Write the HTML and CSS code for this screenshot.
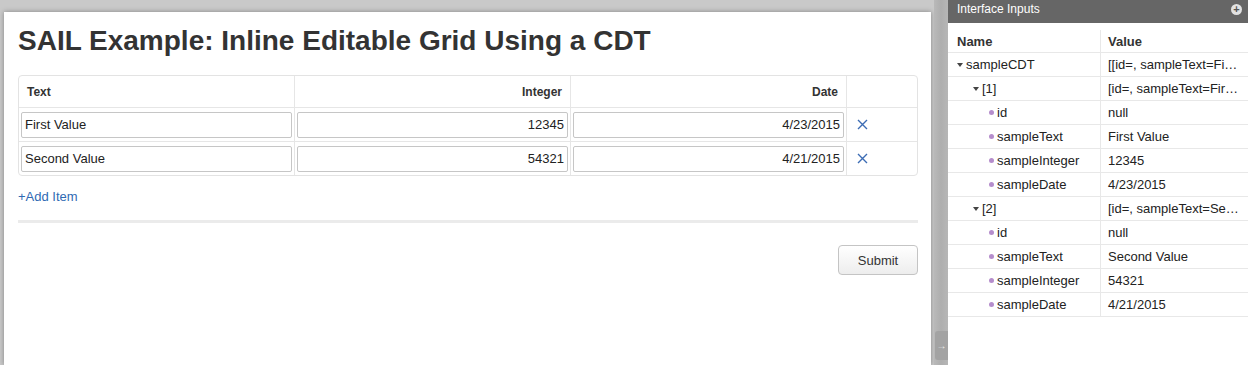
FILE: index.html
```html
<!DOCTYPE html>
<html lang="en">
<head>
    <meta charset="UTF-8">
    <meta name="viewport" content="width=device-width, initial-scale=1.0">
    <title>SAIL Example: Inline Editable Grid Using a CDT</title>
    <link rel="stylesheet" href="styles.css">
</head>
<body>
    <div class="workspace">
        <div class="stage">
            <div class="form-panel">
                <h1 class="title">SAIL Example: Inline Editable Grid Using a CDT</h1>

                <div class="grid">
                    <div class="grid-row grid-head">
                        <div class="cell">Text</div>
                        <div class="cell num">Integer</div>
                        <div class="cell num">Date</div>
                        <div class="cell"></div>
                    </div>
                    <div class="grid-row">
                        <div class="cell"><input class="field" value="First Value"></div>
                        <div class="cell"><input class="field num" value="12345"></div>
                        <div class="cell"><input class="field num" value="4/23/2015"></div>
                        <div class="cell remove">
                            <svg width="11" height="11" viewBox="0 0 11 11"><path d="M1 1 L10 10 M10 1 L1 10" stroke="#3c6cb4" stroke-width="1.4" fill="none"/></svg>
                        </div>
                    </div>
                    <div class="grid-row">
                        <div class="cell"><input class="field" value="Second Value"></div>
                        <div class="cell"><input class="field num" value="54321"></div>
                        <div class="cell"><input class="field num" value="4/21/2015"></div>
                        <div class="cell remove">
                            <svg width="11" height="11" viewBox="0 0 11 11"><path d="M1 1 L10 10 M10 1 L1 10" stroke="#3c6cb4" stroke-width="1.4" fill="none"/></svg>
                        </div>
                    </div>
                </div>

                <a class="add-link" href="#">+Add Item</a>
                <div class="divider"></div>
                <div class="actions">
                    <button class="btn">Submit</button>
                </div>
            </div>
        </div>

        <div class="splitter">
            <div class="handle">&rarr;</div>
        </div>

        <aside class="inputs-panel">
            <div class="inputs-header">
                <span>Interface Inputs</span>
                <span class="add-icon">+</span>
            </div>
            <div class="tree">
                <div class="tree-row tree-head">
                    <div class="name">Name</div>
                    <div class="value">Value</div>
                </div>
                <div class="tree-row">
                    <div class="name lvl0"><span class="caret"></span>sampleCDT</div>
                    <div class="value">[[id=, sampleText=First Value, sampleInteger=12345, sampleDate=4/23/2015], [id=, sampleText=Second Value, sampleInteger=54321, sampleDate=4/21/2015]]</div>
                </div>
                <div class="tree-row">
                    <div class="name lvl1"><span class="caret"></span>[1]</div>
                    <div class="value">[id=, sampleText=First Value, sampleInteger=12345, sampleDate=4/23/2015]</div>
                </div>
                <div class="tree-row">
                    <div class="name lvl2"><span class="dot"></span>id</div>
                    <div class="value">null</div>
                </div>
                <div class="tree-row">
                    <div class="name lvl2"><span class="dot"></span>sampleText</div>
                    <div class="value">First Value</div>
                </div>
                <div class="tree-row">
                    <div class="name lvl2"><span class="dot"></span>sampleInteger</div>
                    <div class="value">12345</div>
                </div>
                <div class="tree-row">
                    <div class="name lvl2"><span class="dot"></span>sampleDate</div>
                    <div class="value">4/23/2015</div>
                </div>
                <div class="tree-row">
                    <div class="name lvl1"><span class="caret"></span>[2]</div>
                    <div class="value">[id=, sampleText=Second Value, sampleInteger=54321, sampleDate=4/21/2015]</div>
                </div>
                <div class="tree-row">
                    <div class="name lvl2"><span class="dot"></span>id</div>
                    <div class="value">null</div>
                </div>
                <div class="tree-row">
                    <div class="name lvl2"><span class="dot"></span>sampleText</div>
                    <div class="value">Second Value</div>
                </div>
                <div class="tree-row">
                    <div class="name lvl2"><span class="dot"></span>sampleInteger</div>
                    <div class="value">54321</div>
                </div>
                <div class="tree-row">
                    <div class="name lvl2"><span class="dot"></span>sampleDate</div>
                    <div class="value">4/21/2015</div>
                </div>
            </div>
        </aside>
    </div>
</body>
</html>
```

FILE: styles.css
```css
* {
    box-sizing: border-box;
}

body {
    margin: 0;
    height: 100vh;
    overflow: hidden;
    background: #c9c9c9;
    font-family: "Liberation Sans", Arial, sans-serif;
    font-size: 13px;
    color: #222;
}

.workspace {
    display: flex;
    height: 100vh;
}

/* left design surface */
.stage {
    width: 934px;
    padding: 12px 3px 0 4px;
    display: flex;
}

.form-panel {
    flex: 1;
    background: #fff;
    padding: 12px 13px 0 14px;
    box-shadow: 0 0 5px rgba(0, 0, 0, 0.35);
}

.title {
    margin: 0;
    font-size: 28px;
    line-height: 34px;
    font-weight: bold;
    color: #333;
}

.grid {
    margin-top: 17px;
    border: 1px solid #e3e3e3;
    border-radius: 4px;
}

.grid-row {
    display: grid;
    grid-template-columns: 276px 276px 276px 1fr;
    height: 34px;
    border-bottom: 1px solid #e6e6e6;
}

.grid-row:last-child {
    border-bottom: none;
    height: 33px;
}

.grid-head {
    height: 32px;
}

.cell {
    display: flex;
    align-items: center;
    padding: 0 2px;
    border-right: 1px solid #e6e6e6;
}

.cell:last-child {
    border-right: none;
}

.grid-head .cell {
    padding: 0 8px;
    font-size: 12px;
    font-weight: bold;
    color: #333;
}

.grid-head .cell.num {
    justify-content: flex-end;
}

.field {
    width: 100%;
    height: 26px;
    border: 1px solid #c6c6c6;
    border-radius: 2px;
    padding: 0 3px;
    font-family: inherit;
    font-size: 13px;
    color: #222;
    background: #fff;
}

.field.num {
    text-align: right;
}

.cell.remove {
    padding-left: 10px;
}

.add-link {
    display: block;
    margin-top: 13px;
    line-height: 16px;
    color: #2f6ab3;
    text-decoration: none;
}

.divider {
    height: 3px;
    margin-top: 15px;
    background: #ebebeb;
}

.actions {
    display: flex;
    justify-content: flex-end;
    margin-top: 22px;
}

.btn {
    width: 80px;
    height: 30px;
    border: 1px solid #c4c4c4;
    border-radius: 4px;
    background: linear-gradient(180deg, #ffffff 0%, #ededed 100%);
    font-family: inherit;
    font-size: 13px;
    color: #333;
}

/* splitter between surface and inputs */
.splitter {
    width: 14px;
    background: linear-gradient(90deg, #b9b9b9 0%, #aeaeae 50%, #b6b6b6 100%);
    display: flex;
    flex-direction: column;
    justify-content: flex-end;
    padding-bottom: 5px;
}

.handle {
    height: 29px;
    margin-left: 1px;
    background: #a3a3a3;
    border-radius: 3px 0 0 3px;
    color: #eee;
    font-size: 10px;
    line-height: 29px;
    text-align: center;
}

/* interface inputs panel */
.inputs-panel {
    width: 300px;
    background: #fff;
}

.inputs-header {
    height: 23px;
    background: #666;
    color: #fff;
    font-size: 12px;
    line-height: 19px;
    padding: 0 6px 0 9px;
    display: flex;
    justify-content: space-between;
}

.add-icon {
    width: 11px;
    height: 11px;
    margin-top: 4px;
    border-radius: 50%;
    background: #e2e2e2;
    color: #555;
    font-size: 11px;
    font-weight: bold;
    line-height: 11px;
    text-align: center;
}

.tree-row {
    display: grid;
    grid-template-columns: 152px 148px;
    height: 24px;
    line-height: 23px;
    border-bottom: 1px solid #e8e8e8;
}

.tree-head {
    height: 30px;
    padding-top: 7px;
    font-weight: bold;
    color: #333;
}

.name {
    display: flex;
    align-items: center;
    padding-left: 9px;
    white-space: nowrap;
}

.value {
    border-left: 1px solid #e8e8e8;
    padding: 0 8px 0 7px;
    white-space: nowrap;
    overflow: hidden;
    text-overflow: ellipsis;
}

.name.lvl1 {
    padding-left: 25px;
}

.name.lvl2 {
    padding-left: 41px;
}

.caret {
    width: 0;
    height: 0;
    margin-right: 3px;
    border-left: 3.5px solid transparent;
    border-right: 3.5px solid transparent;
    border-top: 4px solid #444;
}

.dot {
    width: 5px;
    height: 5px;
    margin-right: 3px;
    border-radius: 50%;
    background: #b58dcc;
}
```
